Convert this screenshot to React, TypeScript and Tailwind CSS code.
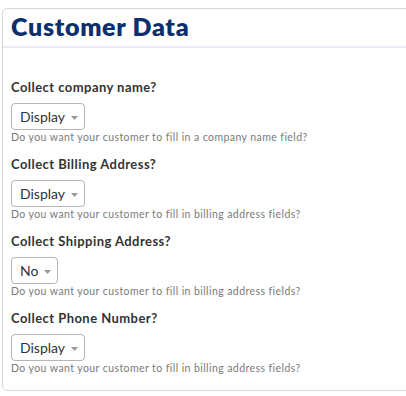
import React from "react";

interface FieldProps {
  label: string;
  value: string;
  help: string;
}

function Caret() {
  return (
    <svg width="7" height="4" viewBox="0 0 7 4" className="ml-[6px] mt-[2px]">
      <path d="M0 0 L7 0 L3.5 4 Z" fill="#9a9a9a" />
    </svg>
  );
}

function Field({ label, value, help }: FieldProps) {
  return (
    <div className="mb-[10px]">
      <label className="block text-[13px] leading-[18px] font-bold tracking-[0.45px] text-[#333]">
        {label}
      </label>
      <div className="mt-[7px] flex w-fit h-[27px] items-center rounded-[4px] border border-[#b5b5b5] bg-white pl-[8px] pr-[6px] text-[14px] text-[#333]">
        <span>{value}</span>
        <Caret />
      </div>
      <p className="text-[10.5px] leading-[15px] tracking-[0.42px] text-[#7a7a7a]">
        {help}
      </p>
    </div>
  );
}

export default function App() {
  const fields: FieldProps[] = [
    {
      label: "Collect company name?",
      value: "Display",
      help: "Do you want your customer to fill in a company name field?",
    },
    {
      label: "Collect Billing Address?",
      value: "Display",
      help: "Do you want your customer to fill in billing address fields?",
    },
    {
      label: "Collect Shipping Address?",
      value: "No",
      help: "Do you want your customer to fill in billing address fields?",
    },
    {
      label: "Collect Phone Number?",
      value: "Display",
      help: "Do you want your customer to fill in billing address fields?",
    },
  ];

  return (
    <div
      className="w-[406px] h-[396px] bg-white pl-[2px] pt-[8px]"
      style={{ fontFamily: "Lato, 'Open Sans', sans-serif" }}
    >
      <div className="w-[420px] rounded-l-[5px] border border-[#d6d6d6]">
        <div className="border-b-2 border-[#e9eef4] pl-[8px] pt-[4px] pb-[6px]">
          <h1 className="text-[25px] leading-[27px] font-extrabold tracking-[0.7px] text-[#0c2f6e]">
            Customer Data
          </h1>
        </div>
        <div className="pl-[8px] pt-[30px] pb-[4px]">
          {fields.map((f) => (
            <Field key={f.label} {...f} />
          ))}
        </div>
      </div>
    </div>
  );
}
